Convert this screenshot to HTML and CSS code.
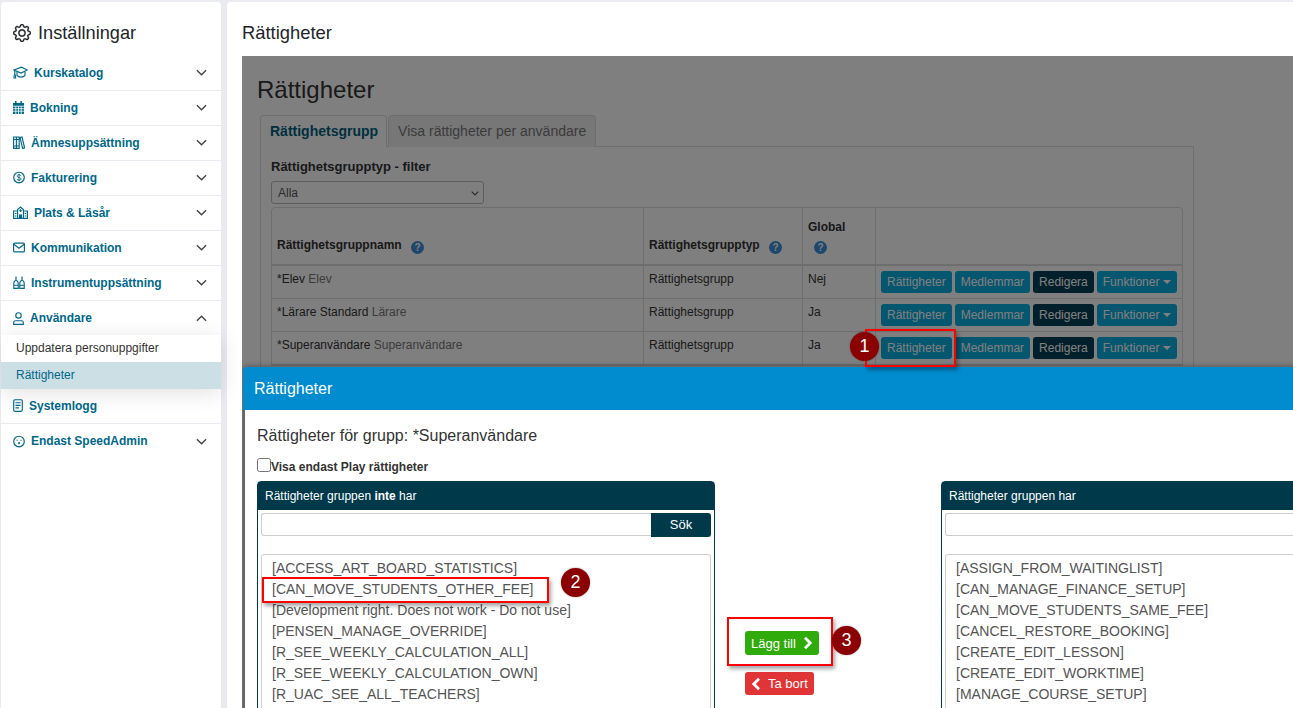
FILE: index.html
```html
<!DOCTYPE html>
<html lang="sv">
<head>
<meta charset="utf-8">
<title>Rättigheter</title>
<link rel="stylesheet" href="styles.css">
</head>
<body>
<div class="app">
  <aside class="sidebar">
    <div class="side-title">
      <svg class="gear" viewBox="0 0 16 16" fill="currentColor" stroke="currentColor" stroke-width=".35"><path d="M8 4.754a3.246 3.246 0 1 0 0 6.492 3.246 3.246 0 0 0 0-6.492zM5.754 8a2.246 2.246 0 1 1 4.492 0 2.246 2.246 0 0 1-4.492 0z"/><path d="M9.796 1.343c-.527-1.79-3.065-1.79-3.592 0l-.094.319a.873.873 0 0 1-1.255.52l-.292-.16c-1.64-.892-3.433.902-2.54 2.541l.159.292a.873.873 0 0 1-.52 1.255l-.319.094c-1.79.527-1.79 3.065 0 3.592l.319.094a.873.873 0 0 1 .52 1.255l-.16.292c-.892 1.64.901 3.434 2.541 2.54l.292-.159a.873.873 0 0 1 1.255.52l.094.319c.527 1.79 3.065 1.79 3.592 0l.094-.319a.873.873 0 0 1 1.255-.52l.292.16c1.64.893 3.434-.902 2.54-2.541l-.159-.292a.873.873 0 0 1 .52-1.255l.319-.094c1.79-.527 1.79-3.065 0-3.592l-.319-.094a.873.873 0 0 1-.52-1.255l.16-.292c.893-1.64-.902-3.433-2.541-2.54l-.292.159a.873.873 0 0 1-1.255-.52l-.094-.319zm-2.633.283c.246-.835 1.428-.835 1.674 0l.094.319a1.873 1.873 0 0 0 2.693 1.115l.291-.16c.764-.415 1.6.42 1.184 1.185l-.159.292a1.873 1.873 0 0 0 1.116 2.692l.318.094c.835.246.835 1.428 0 1.674l-.319.094a1.873 1.873 0 0 0-1.115 2.693l.16.291c.415.764-.42 1.6-1.185 1.184l-.291-.159a1.873 1.873 0 0 0-2.693 1.116l-.094.318c-.246.835-1.428.835-1.674 0l-.094-.319a1.873 1.873 0 0 0-2.692-1.115l-.292.16c-.764.415-1.6-.42-1.184-1.185l.159-.291A1.873 1.873 0 0 0 1.945 8.93l-.319-.094c-.835-.246-.835-1.428 0-1.674l.319-.094A1.873 1.873 0 0 0 3.06 4.377l-.16-.292c-.415-.764.42-1.6 1.185-1.184l.292.159a1.873 1.873 0 0 0 2.692-1.115l.094-.319z"/></svg>
      <span>Inställningar</span>
    </div>
    <nav class="nav">
      <a class="nav-item">
        <svg class="ico w15" viewBox="0 0 15 13"><path d="M1 4 8.500 1.200 14.400 4 8 7z"/><path d="M4 5.800v3.600c1.500 2.200 6.500 2.200 8 0V5.600"/><path d="M1.800 4.500v4M1 12c0-2.200.4-3.500.8-3.500s.8 1.300.8 3.500z"/></svg>
        <span>Kurskatalog</span>
        <svg class="chev" viewBox="0 0 12 7"><path d="M1 1l5 5 5-5"/></svg>
      </a>
      <a class="nav-item">
        <svg class="ico w11" viewBox="0 0 11 13"><path class="fill" d="M0 2h11v11H0z"/><path class="solid" d="M2.800 0v3M8.200 0v3"/><path class="cut" d="M0 5.200h11M0 7.700h11M0 10.200h11M2.800 5.200V13M5.500 5.200V13M8.200 5.200V13"/></svg>
        <span>Bokning</span>
        <svg class="chev" viewBox="0 0 12 7"><path d="M1 1l5 5 5-5"/></svg>
      </a>
      <a class="nav-item">
        <svg class="ico w12" viewBox="0 0 12 13"><path d="M.6 1h2.800v11.400H.6zM3.400 1h2.800v11.400H3.400zM7 1.500 9 1l2.600 10.900-2 .5zM.6 3.500h5.600M.6 10h5.600"/></svg>
        <span>Ämnesuppsättning</span>
        <svg class="chev" viewBox="0 0 12 7"><path d="M1 1l5 5 5-5"/></svg>
      </a>
      <a class="nav-item">
        <svg class="ico w12" viewBox="0 0 12 12"><circle cx="6" cy="6" r="5.300"/><path d="M7.800 4.300C7.500 3.500 6.800 3.200 6 3.200c-1 0-1.800.5-1.800 1.400C4.200 6.500 8 5.500 8 7.400c0 .9-.9 1.400-2 1.400-.9 0-1.700-.4-2-1.200M6 2.300v7.400" stroke-width=".9"/></svg>
        <span>Fakturering</span>
        <svg class="chev" viewBox="0 0 12 7"><path d="M1 1l5 5 5-5"/></svg>
      </a>
      <a class="nav-item">
        <svg class="ico w15" viewBox="0 0 15 13"><path d="M.6 5h4v7.400h-4zM10.400 5h4v7.400h-4zM4.600 3.500 7.500 1l2.900 2.500v8.900H4.600z"/><path class="fill" d="M6 8.500h3v3.900H6z"/><path d="M7.500 3.300v2.800M6.200 4.700h2.600M1.800 7.500h1.600M1.800 10h1.600M11.600 7.500h1.600M11.600 10h1.600"/></svg>
        <span>Plats &amp; Läsår</span>
        <svg class="chev" viewBox="0 0 12 7"><path d="M1 1l5 5 5-5"/></svg>
      </a>
      <a class="nav-item">
        <svg class="ico w12" viewBox="0 0 12 10"><rect x=".6" y=".6" width="10.800" height="8.800" rx="1"/><path d="M.8 1.800 6 5.800l5.200-4"/></svg>
        <span>Kommunikation</span>
        <svg class="chev" viewBox="0 0 12 7"><path d="M1 1l5 5 5-5"/></svg>
      </a>
      <a class="nav-item">
        <svg class="ico w12" viewBox="0 0 12 13"><path d="M3 .5v4M9 .5v4M.8 8c0-2.200 1-3.500 2.200-3.500S5.200 5.800 5.200 8v4.400H.8zM6.800 8c0-2.200 1-3.500 2.200-3.500s2.200 1.300 2.200 3.500v4.400H6.800zM.8 9.200h4.400M6.800 9.200h4.400"/></svg>
        <span>Instrumentuppsättning</span>
        <svg class="chev" viewBox="0 0 12 7"><path d="M1 1l5 5 5-5"/></svg>
      </a>
      <a class="nav-item open">
        <svg class="ico w11" viewBox="0 0 11 13"><circle cx="5.500" cy="3.400" r="2.700"/><path d="M.7 12.400v-1.800c0-1.100.8-1.900 1.800-1.900h6c1 0 1.800.8 1.800 1.900v1.800z"/></svg>
        <span>Användare</span>
        <svg class="chev" viewBox="0 0 12 7"><path d="M1 6l5-5 5 5"/></svg>
      </a>
      <div class="subnav">
        <a class="sub-item">Uppdatera personuppgifter</a>
        <a class="sub-item active">Rättigheter</a>
      </div>
      <a class="nav-item">
        <svg class="ico w10" viewBox="0 0 10 13"><rect x=".7" y=".7" width="8.600" height="11.600" rx="1.200"/><path d="M2.500 3.700h5M2.500 6.300h5M2.500 8.900h3.500"/></svg>
        <span>Systemlogg</span>
      </a>
      <a class="nav-item last">
        <svg class="ico w12" viewBox="0 0 12 12"><circle cx="6" cy="6" r="5.300"/><circle class="fill" cx="4" cy="4.700" r=".6"/><circle class="fill" cx="8" cy="4.700" r=".6"/><circle class="fill" cx="6" cy="7.600" r="1.100"/></svg>
        <span>Endast SpeedAdmin</span>
        <svg class="chev" viewBox="0 0 12 7"><path d="M1 1l5 5 5-5"/></svg>
      </a>
    </nav>
  </aside>

  <main class="main">
    <h2 class="main-title">Rättigheter</h2>
    <section class="shot">
      <div class="page">
        <h1 class="page-title">Rättigheter</h1>
        <div class="tabs">
          <div class="tab tab-on">Rättighetsgrupp</div>
          <div class="tab">Visa rättigheter per användare</div>
        </div>
        <div class="pane">
          <div class="filter-label">Rättighetsgrupptyp - filter</div>
          <select class="filter"><option>Alla</option></select>
          <table class="grid">
            <colgroup><col class="c1"><col class="c2"><col class="c3"><col class="c4"></colgroup>
            <thead>
              <tr>
                <th>Rättighetsgruppnamn <i class="help">?</i></th>
                <th>Rättighetsgrupptyp <i class="help">?</i></th>
                <th><div class="global">Global</div><i class="help help-global">?</i></th>
                <th></th>
              </tr>
            </thead>
            <tbody>
              <tr>
                <td>*Elev <span class="muted">Elev</span></td>
                <td>Rättighetsgrupp</td>
                <td>Nej</td>
                <td><div class="btns"><b class="btn info">Rättigheter</b><b class="btn info">Medlemmar</b><b class="btn dark">Redigera</b><b class="btn info">Funktioner <i class="caret"></i></b></div></td>
              </tr>
              <tr>
                <td>*Lärare Standard <span class="muted">Lärare</span></td>
                <td>Rättighetsgrupp</td>
                <td>Ja</td>
                <td><div class="btns"><b class="btn info">Rättigheter</b><b class="btn info">Medlemmar</b><b class="btn dark">Redigera</b><b class="btn info">Funktioner <i class="caret"></i></b></div></td>
              </tr>
              <tr>
                <td>*Superanvändare <span class="muted">Superanvändare</span></td>
                <td>Rättighetsgrupp</td>
                <td>Ja</td>
                <td><div class="btns"><b class="btn info">Rättigheter</b><b class="btn info">Medlemmar</b><b class="btn dark">Redigera</b><b class="btn info">Funktioner <i class="caret"></i></b></div></td>
              </tr>
            </tbody>
          </table>
        </div>
      </div>
      <div class="dim"></div>

      <div class="modal">
        <div class="modal-head">Rättigheter</div>
        <div class="modal-body">
          <div class="modal-title">Rättigheter för grupp: *Superanvändare</div>
          <label class="play"><input type="checkbox"><span>Visa endast Play rättigheter</span></label>
          <div class="columns">
            <div class="box">
              <div class="box-head">Rättigheter gruppen <b>inte</b> har</div>
              <div class="box-body">
                <div class="search"><input class="search-input" type="text"><b class="search-btn">Sök</b></div>
                <ul class="list">
                  <li>[ACCESS_ART_BOARD_STATISTICS]</li>
                  <li>[CAN_MOVE_STUDENTS_OTHER_FEE]</li>
                  <li>[Development right. Does not work - Do not use]</li>
                  <li>[PENSEN_MANAGE_OVERRIDE]</li>
                  <li>[R_SEE_WEEKLY_CALCULATION_ALL]</li>
                  <li>[R_SEE_WEEKLY_CALCULATION_OWN]</li>
                  <li>[R_UAC_SEE_ALL_TEACHERS]</li>
                </ul>
              </div>
            </div>
            <div class="mid">
              <b class="act add">Lägg till <svg class="act-chev" viewBox="0 0 11 14"><path d="M3 1.800 8.200 7 3 12.200"/></svg></b>
              <b class="act del"><svg class="act-chev" viewBox="0 0 11 14"><path d="M8 1.800 2.800 7 8 12.200"/></svg> Ta bort</b>
            </div>
            <div class="box">
              <div class="box-head">Rättigheter gruppen har</div>
              <div class="box-body">
                <div class="search"><input class="search-input" type="text"></div>
                <ul class="list">
                  <li>[ASSIGN_FROM_WAITINGLIST]</li>
                  <li>[CAN_MANAGE_FINANCE_SETUP]</li>
                  <li>[CAN_MOVE_STUDENTS_SAME_FEE]</li>
                  <li>[CANCEL_RESTORE_BOOKING]</li>
                  <li>[CREATE_EDIT_LESSON]</li>
                  <li>[CREATE_EDIT_WORKTIME]</li>
                  <li>[MANAGE_COURSE_SETUP]</li>
                </ul>
              </div>
            </div>
          </div>
        </div>
      </div>

      <div class="mark mark-1"></div>
      <div class="mark mark-2"></div>
      <div class="mark mark-3"></div>
      <div class="num num-1">1</div>
      <div class="num num-2">2</div>
      <div class="num num-3">3</div>
    </section>
  </main>
</div>
</body>
</html>
```

FILE: styles.css
```css
* { box-sizing: border-box; }
html, body { margin: 0; height: 708px; overflow: hidden; }
body { background: #e9ebf0; font-family: "Liberation Sans", Arial, sans-serif; color: #333; font-size: 12px; }
.app { display: flex; gap: 6px; height: 708px; padding: 2px 0 0 1px; }

/* sidebar */
.sidebar { width: 220px; flex: none; background: #fff; border-radius: 4px 4px 0 0; }
.side-title { display: flex; align-items: center; gap: 7px; padding: 21px 12px 13px; font-size: 18.2px; line-height: 20px; color: #212529; }
.gear { width: 18px; height: 18px; flex: none; }
.nav { display: flex; flex-direction: column; }
.nav-item { display: flex; align-items: center; gap: 6px; height: 35px; padding: 0 14px 1px 12px; border-bottom: 1px solid #e9ebf0; color: #00688b; font-weight: 700; font-size: 12px; }
.nav-item.open { height: 34px; padding-bottom: 0; border-bottom: 0; }
.nav-item.last { border-bottom: 0; }
.ico { flex: none; height: 13px; fill: none; stroke: #00688b; stroke-width: 1.150; }
.ico .fill { fill: #00688b; stroke: none; }
.ico .solid { stroke-width: 1.500; }
.ico .cut { stroke: #fff; stroke-width: .8; }
.w15 { width: 15px; } .w12 { width: 12px; } .w11 { width: 11px; } .w10 { width: 10px; }
.chev { margin-left: auto; width: 11px; height: 7px; fill: none; stroke: #444; stroke-width: 1.500; }
.subnav { position: relative; z-index: 2; background: #fff; box-shadow: 0 4px 22px rgba(0, 0, 0, .12); }
.sub-item { display: block; height: 27px; padding-left: 15px; line-height: 26px; font-size: 12px; color: #333; }
.sub-item.active { background: #cbdfe5; color: #00688b; }

/* main */
.main { flex: 1; min-width: 0; background: #fff; border-radius: 4px 0 0 0; padding: 0 0 0 15px; overflow: hidden; display: flex; flex-direction: column; }
.main-title { margin: 0; padding: 21px 0 13px; font-size: 18.4px; line-height: 20px; font-weight: 400; color: #212529; }
.shot { position: relative; flex: 1; overflow: hidden; background: #fff; }
.dim { position: absolute; inset: 0; background: rgba(0, 0, 0, .5); }
.page { position: relative; z-index: 0; padding: 21px 0 0 15px; }
.page-title { margin: 0 0 12px; font-size: 24px; line-height: 26px; font-weight: 400; color: #333; }
.tabs { display: flex; gap: 1px; margin-left: 3px; width: 934px; height: 31px; }
.tab { padding: 0 9px; height: 32px; line-height: 30px; font-size: 14px; color: #777; background: #eee; border: 1px solid #ddd; border-bottom: 0; border-radius: 4px 4px 0 0; }
.tab-on { position: relative; z-index: 1; padding-right: 8px; background: #fff; color: #005f7f; font-weight: 700; }
.pane { margin-left: 3px; width: 934px; height: 400px; border: 1px solid #ddd; padding: 12px 10px 0; }
.filter-label { font-size: 13px; line-height: 16px; font-weight: 700; color: #333; }
.filter { display: block; width: 213px; height: 23px; margin-top: 6px; padding-left: 6px; font: 12px "Liberation Sans", Arial, sans-serif; color: #555; appearance: none; background: #fff url("data:image/svg+xml,%3Csvg xmlns='http://www.w3.org/2000/svg' width='8' height='5'%3E%3Cpath d='M.7.7 4 4 7.300.7' fill='none' stroke='%23555' stroke-width='1.200'/%3E%3C/svg%3E") no-repeat 199px 9px; border: 1px solid #bbb; border-radius: 3px; }
.grid { margin-top: 3px; width: 912px; table-layout: fixed; border-collapse: separate; border-spacing: 0; border: 1px solid #ddd; border-radius: 4px 4px 0 0; }
.c1 { width: 372px; } .c2 { width: 159px; } .c3 { width: 73px; } .c4 { width: 306px; }
.grid th, .grid td { border-right: 1px solid #ddd; border-bottom: 1px solid #ddd; font-size: 12px; text-align: left; }
.grid th:last-child, .grid td:last-child { border-right: 0; }
.grid th { height: 58px; padding: 0 5px 10px; vertical-align: bottom; line-height: 17px; border-bottom-width: 2px; font-weight: 700; }
.grid td { height: 33px; padding: 5px 5px 0; vertical-align: top; line-height: 17px; }
.muted { color: #777; }
.help { display: inline-block; width: 13px; height: 13px; margin-left: 6px; border-radius: 50%; background: #3a8ed8; color: #fff; font-style: normal; font-size: 10px; font-weight: 700; line-height: 13px; text-align: center; vertical-align: -2px; }
.help-global { display: block; margin: 5px 0 0 6px; }
.global { line-height: 17px; }
.btns { display: flex; gap: 3px; }
.btn { display: block; height: 22px; padding: 0 6px; line-height: 22px; font-size: 12px; font-weight: 400; color: #fff; white-space: nowrap; border-radius: 3px; }
.info { background: #0aacde; }
.dark { background: #044056; }
.caret { display: inline-block; width: 0; height: 0; vertical-align: 2px; border-top: 4px solid #fff; border-left: 4px solid transparent; border-right: 4px solid transparent; }

/* modal */
.modal { position: absolute; left: 1px; top: 311px; width: 1200px; height: 500px; background: #fff; border-left: 2px solid #666; border-radius: 4px 0 0 0; box-shadow: 0 -1px 5px rgba(0, 0, 0, .3); }
.modal-head { height: 43px; margin-left: -2px; padding-left: 11px; background: #008ccf; color: #fff; font-size: 16px; line-height: 43px; border-radius: 4px 0 0 0; }
.modal-body { padding: 15px 0 0 12px; }
.modal-title { font-size: 16px; line-height: 22px; color: #333; }
.play { display: flex; margin-top: 11px; height: 14px; font-size: 12px; line-height: 19px; font-weight: 700; color: #333; }
.play input { width: 14px; height: 14px; margin: 0; flex: none; }
.columns { display: flex; margin-top: 9px; }
.box { width: 458px; flex: none; border: 1px solid #00394a; border-radius: 4px 4px 0 0; }
.box-head { height: 28px; padding-left: 7px; background: #00394a; color: #fff; font-size: 12px; line-height: 28px; }
.box-body { padding: 3px 3px 0; }
.search { display: flex; height: 24px; }
.search-input { flex: 1; min-width: 0; height: 23px; border: 1px solid #ccc; border-right: 0; border-radius: 3px 0 0 3px; background: #fff; }
.search-btn { width: 60px; height: 24px; background: #00394a; color: #fff; font-size: 13px; font-weight: 400; line-height: 23px; text-align: center; border-radius: 0 3px 3px 0; }
.list { margin: 17px 0 0; padding: 3px 0 40px 10px; list-style: none; border: 1px solid #ccc; border-radius: 3px; font-size: 14px; line-height: 21px; color: #555; }
.mid { width: 226px; flex: none; display: flex; flex-direction: column; align-items: flex-start; gap: 17px; padding: 150px 0 0 30px; }
.act { display: flex; align-items: center; gap: 6px; padding: 0 6px; color: #fff; font-size: 13px; font-weight: 400; border-radius: 3px; white-space: nowrap; }
.add { height: 24px; background: #2fac0c; }
.del { height: 23px; background: #e03437; }
.act-chev { width: 11px; height: 14px; fill: none; stroke: #fff; stroke-width: 2.800; }

/* annotations */
.mark { position: absolute; border: 2px solid #f00; box-shadow: 2px 3px 4px rgba(0, 0, 0, .35); }
.mark-1 { left: 623px; top: 273px; width: 91px; height: 38px; }
.mark-2 { left: 20px; top: 521px; width: 287px; height: 26px; }
.mark-3 { left: 485px; top: 561px; width: 106px; height: 49px; }
.num { position: absolute; width: 29px; height: 29px; border-radius: 50%; background: #8b0000; color: #fff; font-size: 18px; line-height: 28px; text-align: center; box-shadow: 0 0 2px rgba(0, 0, 0, .4); }
.num-1 { left: 608px; top: 276px; }
.num-2 { left: 319px; top: 512px; }
.num-3 { left: 590px; top: 570px; }
```
